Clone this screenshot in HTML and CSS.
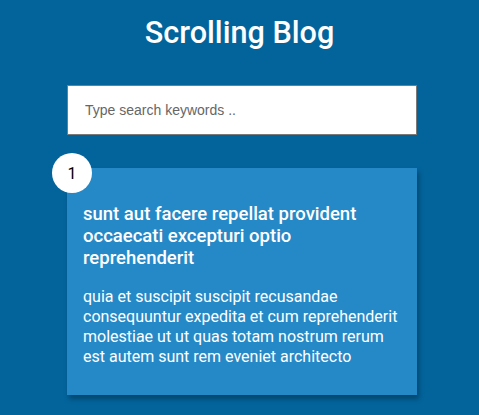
FILE: index.html
```html
<!DOCTYPE html>
<html lang="en">
<head>
<meta charset="UTF-8">
<title>Scrolling Blog</title>
<link rel="stylesheet" href="styles.css">
</head>
<body>
  <h1 class="title">Scrolling Blog</h1>
  <div class="filter">
    <input type="text" class="search" placeholder="Type search keywords ..">
  </div>
  <div class="posts">
    <div class="post">
      <div class="number">1</div>
      <div class="post-info">
        <h2 class="post-title">sunt aut facere repellat provident occaecati excepturi optio reprehenderit</h2>
        <p class="post-body">quia et suscipit suscipit recusandae consequuntur expedita et cum reprehenderit molestiae ut ut quas totam nostrum rerum est autem sunt rem eveniet architecto</p>
      </div>
    </div>
  </div>
</body>
</html>
```
FILE: styles.css
```css
* { box-sizing: border-box; }
html, body { margin: 0; padding: 0; }
body {
  background: #03649c;
  color: #fff;
  font-family: Roboto, "Liberation Sans", sans-serif;
  display: flex;
  flex-direction: column;
  align-items: center;
  min-height: 415px;
  overflow: hidden;
}
.title {
  margin: 15px 0 0;
  font-size: 30.6px;
  font-weight: 500;
  line-height: normal;
}
.filter {
  margin-top: 35px;
  margin-left: 5px;
  width: 350px;
}
.search {
  display: block;
  width: 350px;
  height: 50px;
  border: 1px solid #7a7a7a;
  padding: 0 17px;
  font-family: "Liberation Sans", Arial, sans-serif;
  font-size: 14px;
  color: #333;
  background: #fff;
  outline: none;
}
.search::placeholder { color: #666; }
.posts {
  margin-top: 33px;
  margin-left: 5px;
  width: 350px;
}
.post {
  position: relative;
  background: #2689c7;
  width: 350px;
  height: 227px;
  padding: 35px 16px 0;
  box-shadow: 2px 4px 5px rgba(0, 0, 0, 0.3);
}
.number {
  position: absolute;
  top: -15px;
  left: -15px;
  width: 40px;
  height: 40px;
  border-radius: 50%;
  background: #fff;
  color: #000;
  font-size: 16px;
  display: flex;
  align-items: center;
  justify-content: center;
}
.post-title {
  margin: 0;
  font-size: 18.5px;
  font-weight: 500;
  line-height: 22px;
}
.post-body {
  margin: 18px 0 0;
  font-size: 16px;
  font-weight: 400;
  line-height: 20px;
}
```
